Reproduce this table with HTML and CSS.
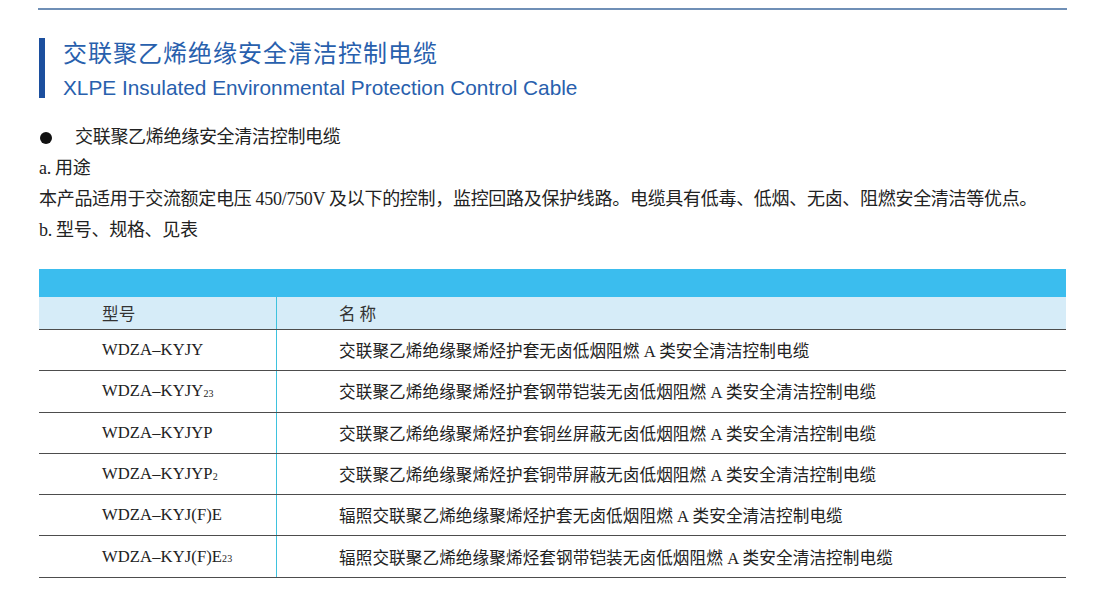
FILE: index.html
```html
<!DOCTYPE html>
<html lang="zh-CN">
<head>
<meta charset="utf-8">
<title>交联聚乙烯绝缘安全清洁控制电缆</title>
<link rel="stylesheet" href="styles.css">
</head>
<body>
<div class="page">
  <div class="topline"></div>
  <header class="heading">
    <div class="bar"></div>
    <div class="titles">
      <h1 class="title-cn">交联聚乙烯绝缘安全清洁控制电缆</h1>
      <h2 class="title-en">XLPE Insulated Environmental Protection Control Cable</h2>
    </div>
  </header>
  <section class="intro">
    <p class="line bullet-line"><span class="dot"></span>交联聚乙烯绝缘安全清洁控制电缆</p>
    <p class="line">a. 用途</p>
    <p class="line">本产品适用于交流额定电压 450/750V 及以下的控制，监控回路及保护线路。电缆具有低毒、低烟、无卤、阻燃安全清洁等优点。</p>
    <p class="line">b. 型号、规格、见表</p>
  </section>
  <div class="table">
    <div class="band"></div>
    <div class="row head">
      <div class="cell c1">型号</div>
      <div class="cell c2">名 称</div>
    </div>
    <div class="row">
      <div class="cell c1">WDZA–KYJY</div>
      <div class="cell c2">交联聚乙烯绝缘聚烯烃护套无卤低烟阻燃 A 类安全清洁控制电缆</div>
    </div>
    <div class="row">
      <div class="cell c1">WDZA–KYJY<span class="sub">23</span></div>
      <div class="cell c2">交联聚乙烯绝缘聚烯烃护套钢带铠装无卤低烟阻燃 A 类安全清洁控制电缆</div>
    </div>
    <div class="row">
      <div class="cell c1">WDZA–KYJYP</div>
      <div class="cell c2">交联聚乙烯绝缘聚烯烃护套铜丝屏蔽无卤低烟阻燃 A 类安全清洁控制电缆</div>
    </div>
    <div class="row">
      <div class="cell c1">WDZA–KYJYP<span class="sub">2</span></div>
      <div class="cell c2">交联聚乙烯绝缘聚烯烃护套铜带屏蔽无卤低烟阻燃 A 类安全清洁控制电缆</div>
    </div>
    <div class="row">
      <div class="cell c1">WDZA–KYJ(F)E</div>
      <div class="cell c2">辐照交联聚乙烯绝缘聚烯烃护套无卤低烟阻燃 A 类安全清洁控制电缆</div>
    </div>
    <div class="row">
      <div class="cell c1">WDZA–KYJ(F)E<span class="sub">23</span></div>
      <div class="cell c2">辐照交联聚乙烯绝缘聚烯烃套钢带铠装无卤低烟阻燃 A 类安全清洁控制电缆</div>
    </div>
  </div>
</div>
</body>
</html>
```
FILE: styles.css
```css
* { box-sizing: border-box; }
html, body { margin: 0; padding: 0; background: #fff; }
body {
  font-family: "Liberation Serif", "Noto Sans CJK SC", serif;
  color: #222;
}
.page {
  width: 1113px;
  padding-top: 8px;
}
.topline {
  margin-left: 38px;
  width: 1029px;
  height: 2px;
  background: #6f8fb6;
}
.heading {
  display: flex;
  margin-top: 28px;
  margin-left: 39px;
}
.bar {
  width: 6px;
  height: 60px;
  background: #1c4f9e;
}
.titles {
  margin-left: 18px;
}
.title-cn {
  margin: 0;
  font-family: "Noto Sans CJK SC", sans-serif;
  font-weight: normal;
  font-size: 24px;
  letter-spacing: 1px;
  line-height: 28px;
  color: #2860ad;
}
.title-en {
  margin: 12px 0 0;
  font-family: "Liberation Sans", Arial, sans-serif;
  font-weight: normal;
  font-size: 20.8px;
  line-height: 20px;
  color: #2860ad;
}
.intro {
  margin-top: 24px;
  margin-left: 39px;
}
.line {
  margin: 0;
  font-size: 18px;
  letter-spacing: -0.3px;
  line-height: 31px;
  height: 31px;
  white-space: nowrap;
}
.bullet-line {
  display: flex;
  align-items: center;
}
.dot {
  width: 12px;
  height: 12px;
  border-radius: 50%;
  background: #111;
  margin-left: 1px;
  margin-right: 23px;
}
.table {
  margin-top: 23px;
  margin-left: 39px;
  width: 1027px;
}
.band {
  height: 28px;
  background: #3bbdee;
}
.row {
  display: flex;
  height: 41.3px;
  border-bottom: 1.5px solid #4d4d4d;
  font-size: 16.6px;
  letter-spacing: 0.1px;
}
.row.head {
  height: 33px;
  background: #d6ecf8;
  font-family: "Noto Sans CJK SC", sans-serif;
  color: #333;
}
.cell {
  display: flex;
  align-items: center;
  white-space: nowrap;
}
.c1 {
  width: 238px;
  padding-left: 63px;
  border-right: 1px solid #3ec2de;
}
.c2 {
  padding-left: 62px;
}
.sub {
  font-size: 10px;
  position: relative;
  top: 2px;
}
```
